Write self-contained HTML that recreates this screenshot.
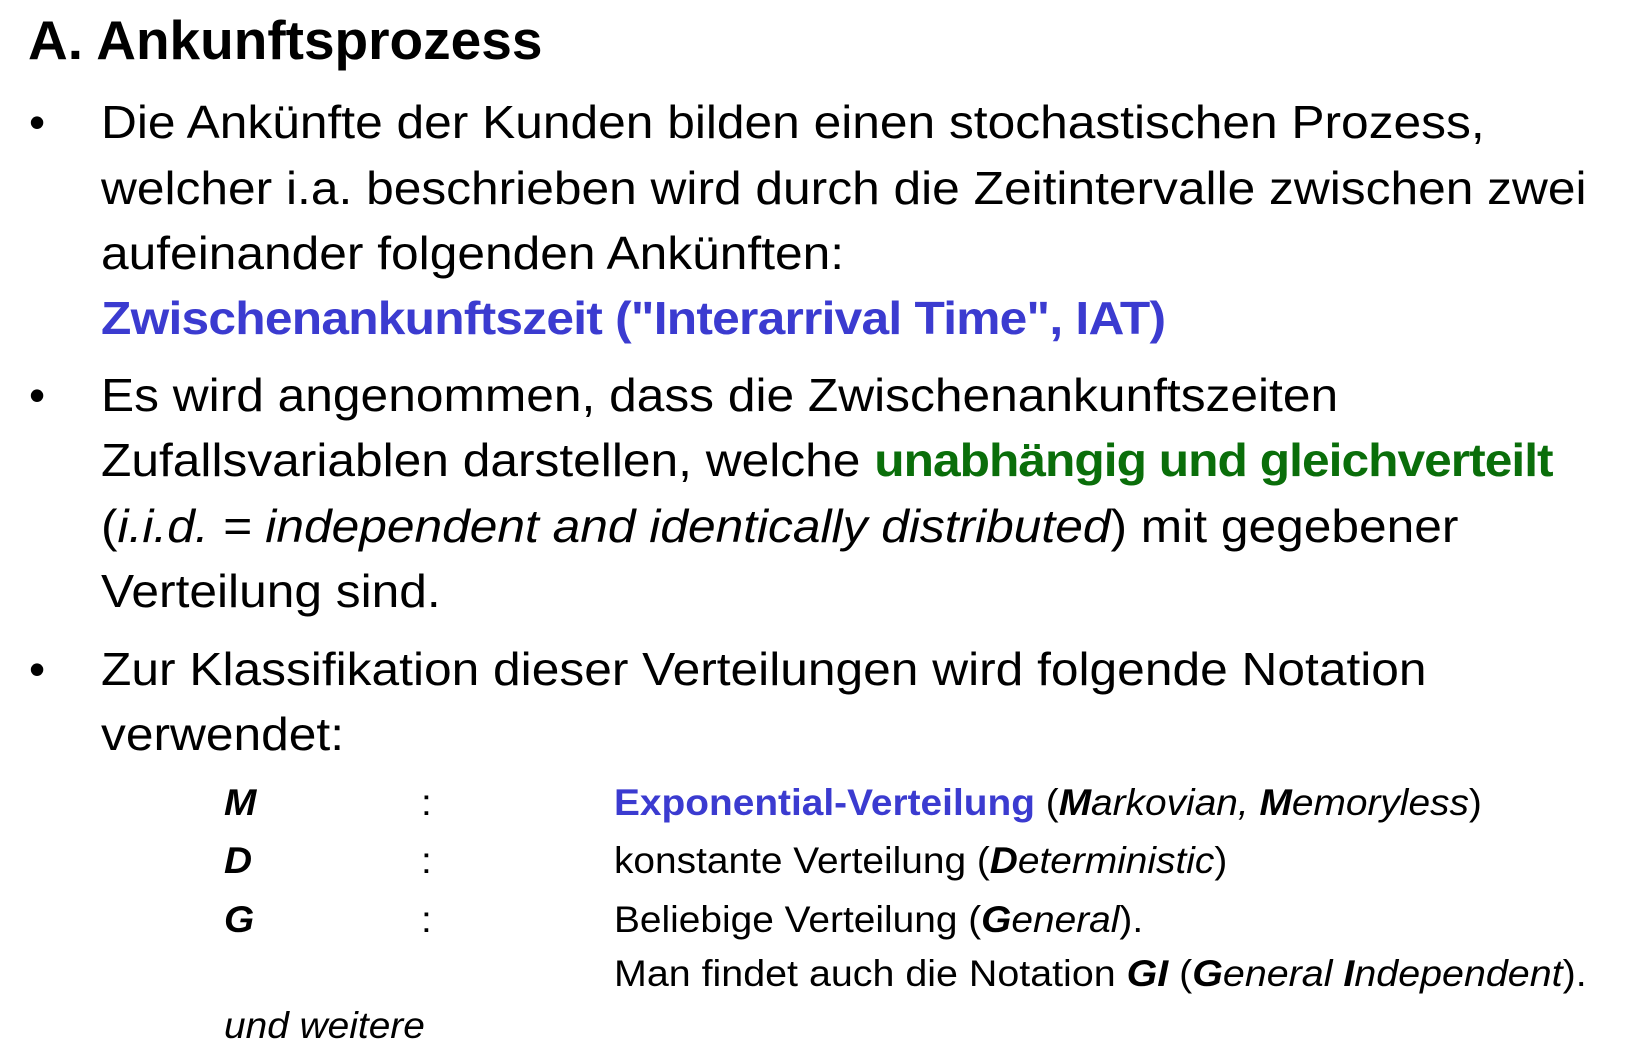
<!DOCTYPE html>
<html><head><meta charset="utf-8"><style>
body{margin:0;width:1630px;height:1050px;background:#fff;position:relative;overflow:hidden;font-family:"Liberation Sans",sans-serif;color:#000}
.l{position:absolute;white-space:nowrap;line-height:60px;height:60px;font-size:46px;transform-origin:0 50%;transform:scaleX(1.08)}
.s{font-size:37px;transform:scaleX(1.05)}
.b{color:#3b3bd0;font-weight:bold;letter-spacing:-0.7px}
.g{color:#0a6e0a;font-weight:bold;letter-spacing:-0.9px}
.bul{position:absolute;font-size:46px;line-height:60px}
</style></head><body>
<div class="l" style="left:28px;top:10px;font-size:55px;font-weight:bold;transform:none">A. Ankunftsprozess</div>
<div class="bul" style="left:29px;top:92px">•</div>
<div class="l" style="left:101px;top:92px">Die Ankünfte der Kunden bilden einen stochastischen Prozess,</div>
<div class="l" style="left:101px;top:158px">welcher i.a. beschrieben wird durch die Zeitintervalle zwischen zwei</div>
<div class="l" style="left:101px;top:223px">aufeinander folgenden Ankünften:</div>
<div class="l b" style="left:101px;top:288px">Zwischenankunftszeit ("Interarrival Time", IAT)</div>
<div class="bul" style="left:29px;top:365px">•</div>
<div class="l" style="left:101px;top:365px">Es wird angenommen, dass die Zwischenankunftszeiten</div>
<div class="l" style="left:101px;top:430px">Zufallsvariablen darstellen, welche <span class="g">unabhängig und gleichverteilt</span></div>
<div class="l" style="left:101px;top:496px">(<i>i.i.d. = independent and identically distributed</i>) mit gegebener</div>
<div class="l" style="left:101px;top:561px">Verteilung sind.</div>
<div class="bul" style="left:29px;top:639px">•</div>
<div class="l" style="left:101px;top:639px">Zur Klassifikation dieser Verteilungen wird folgende Notation</div>
<div class="l" style="left:101px;top:704px">verwendet:</div>
<div class="l s" style="left:224px;top:773px"><b><i>M</i></b></div>
<div class="l s" style="left:421px;top:773px">:</div>
<div class="l s" style="left:614px;top:773px"><span class="b" style="letter-spacing:0">Exponential-Verteilung</span> (<b><i>M</i></b><i>arkovian, </i><b><i>M</i></b><i>emoryless</i>)</div>
<div class="l s" style="left:224px;top:831px"><b><i>D</i></b></div>
<div class="l s" style="left:421px;top:831px">:</div>
<div class="l s" style="left:614px;top:831px">konstante Verteilung (<b><i>D</i></b><i>eterministic</i>)</div>
<div class="l s" style="left:224px;top:890px"><b><i>G</i></b></div>
<div class="l s" style="left:421px;top:890px">:</div>
<div class="l s" style="left:614px;top:890px">Beliebige Verteilung (<b><i>G</i></b><i>eneral</i>).</div>
<div class="l s" style="left:614px;top:944px;transform:scaleX(1.065)">Man findet auch die Notation <b><i>GI</i></b> (<b><i>G</i></b><i>eneral </i><b><i>I</i></b><i>ndependent</i>).</div>
<div class="l s" style="left:224px;top:996px"><i>und weitere</i></div>
</body></html>
